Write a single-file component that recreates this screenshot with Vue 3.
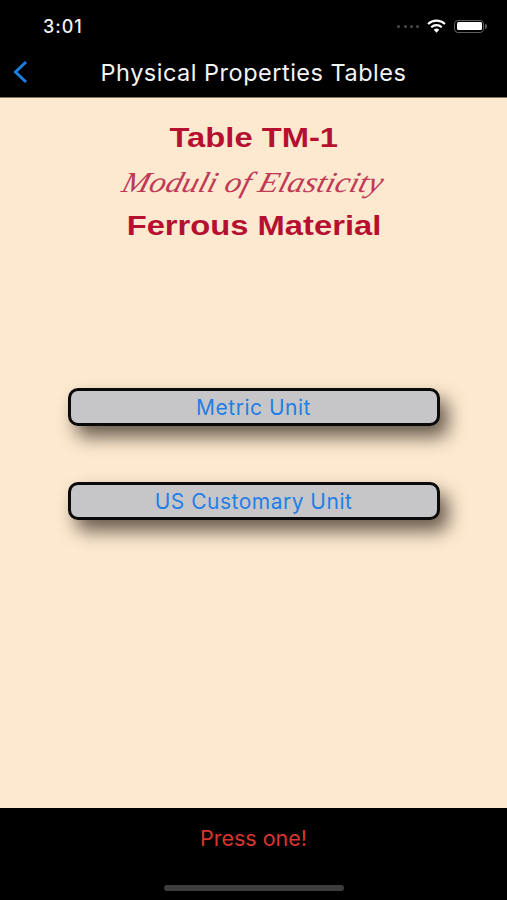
<template>
  <div class="screen">
    <header class="top">
      <div class="status">
        <span class="time">3:01</span>
        <div class="indicators">
          <div class="dots"><i></i><i></i><i></i><i></i></div>
          <svg class="wifi" width="19" height="14" viewBox="0 0 18 13">
            <path d="M1 4.6 A11.6 11.6 0 0 1 17 4.6" fill="none" stroke="#fff" stroke-width="2"/>
            <path d="M4 7.6 A7.4 7.4 0 0 1 14 7.6" fill="none" stroke="#fff" stroke-width="2"/>
            <path d="M6.4 10 L9 12.8 L11.6 10 A3.8 3.8 0 0 0 6.4 10 Z" fill="#fff"/>
          </svg>
          <div class="battery"><div class="level"></div></div>
          <div class="cap"></div>
        </div>
      </div>
      <nav class="nav">
        <svg class="back" width="16" height="24" viewBox="0 0 16 24">
          <path d="M14 2 L3.5 12 L14 22" fill="none" stroke="#1a7fe0" stroke-width="3"/>
        </svg>
        <h1>Physical Properties Tables</h1>
      </nav>
    </header>
    <main class="content">
      <div class="titles">
        <div class="title">Table TM-1</div>
        <div class="script">Moduli of Elasticity</div>
        <div class="title">Ferrous Material</div>
      </div>
      <div class="buttons">
        <button class="unit" v-for="u in units" :key="u">{{ u }}</button>
      </div>
    </main>
    <footer class="bottom">
      <span class="press">Press one!</span>
      <div class="home"></div>
    </footer>
  </div>
</template>

<script setup>
const units = ['Metric Unit', 'US Customary Unit']
</script>

<style>
html, body { margin: 0; background: #000; }
</style>

<style scoped>
.screen {
  width: 507px;
  height: 900px;
  display: flex;
  flex-direction: column;
  overflow: hidden;
  font-family: Inter, "Liberation Sans", sans-serif;
  background: #000;
}
.top {
  height: 98px;
  box-sizing: border-box;
  background: #000;
  border-bottom: 1px solid #8a7a62;
  flex: none;
  display: flex;
  flex-direction: column;
}
.status {
  height: 48px;
  padding: 4px 20px 0 43px;
  box-sizing: border-box;
  display: flex;
  align-items: center;
  justify-content: space-between;
}
.time {
  color: #f2f2f2;
  font-size: 18px;
  font-weight: 500;
  letter-spacing: 1px;
}
.indicators {
  display: flex;
  align-items: center;
}
.dots {
  display: flex;
  gap: 3.2px;
  margin-right: 8px;
}
.dots i {
  width: 3px;
  height: 3px;
  border-radius: 50%;
  background: #4a4a4a;
}
.wifi { margin-right: 8px; }
.battery {
  width: 30px;
  height: 13px;
  box-sizing: border-box;
  border: 1.5px solid #5e5e5e;
  border-radius: 4px;
  padding: 1.5px;
}
.level {
  width: 100%;
  height: 100%;
  background: #fff;
  border-radius: 1.5px;
}
.cap {
  width: 2px;
  height: 5px;
  margin-left: 1px;
  background: #5e5e5e;
  border-radius: 0 2px 2px 0;
}
.nav {
  flex: 1;
  position: relative;
  display: flex;
  align-items: center;
  justify-content: center;
}
.back {
  position: absolute;
  left: 12px;
  top: 12px;
}
h1 {
  margin: 0;
  color: #f4f4f4;
  font-size: 23.5px;
  font-weight: 400;
  letter-spacing: 0.5px;
}
.content {
  flex: 1;
  background: #fde8d0;
  display: flex;
  flex-direction: column;
  align-items: center;
}
.titles {
  padding-top: 23px;
  display: flex;
  flex-direction: column;
  align-items: center;
  color: #b5102f;
}
.title {
  font-family: "Liberation Sans", Arial, sans-serif;
  font-weight: 700;
  font-size: 27.5px;
  line-height: 34px;
  transform: scaleX(1.19);
}
.script {
  font-family: "Liberation Serif", serif;
  font-style: italic;
  font-size: 29px;
  line-height: 54px;
  color: #c03a55;
  transform: scaleX(1.13) skewX(-14deg);
}
.buttons {
  margin-top: 145px;
  display: flex;
  flex-direction: column;
  gap: 56px;
}
.unit {
  width: 372px;
  height: 38px;
  box-sizing: border-box;
  border: 3px solid #0a0a0a;
  border-radius: 10px;
  background: #c6c6c8;
  color: #1f7fe6;
  font-family: Inter, "Liberation Sans", sans-serif;
  font-size: 21px;
  font-weight: 400;
  letter-spacing: 0.5px;
  padding: 0;
  box-shadow: 8px 11px 18px rgba(50, 40, 28, 0.72);
}
.bottom {
  height: 92px;
  flex: none;
  background: #000;
  position: relative;
  display: flex;
  justify-content: center;
  padding-top: 18px;
  box-sizing: border-box;
}
.press {
  color: #d9352f;
  font-size: 21.5px;
  line-height: 24px;
}
.home {
  position: absolute;
  left: 164px;
  bottom: 9px;
  width: 180px;
  height: 6px;
  border-radius: 3px;
  background: #3d3d3d;
}
</style>
